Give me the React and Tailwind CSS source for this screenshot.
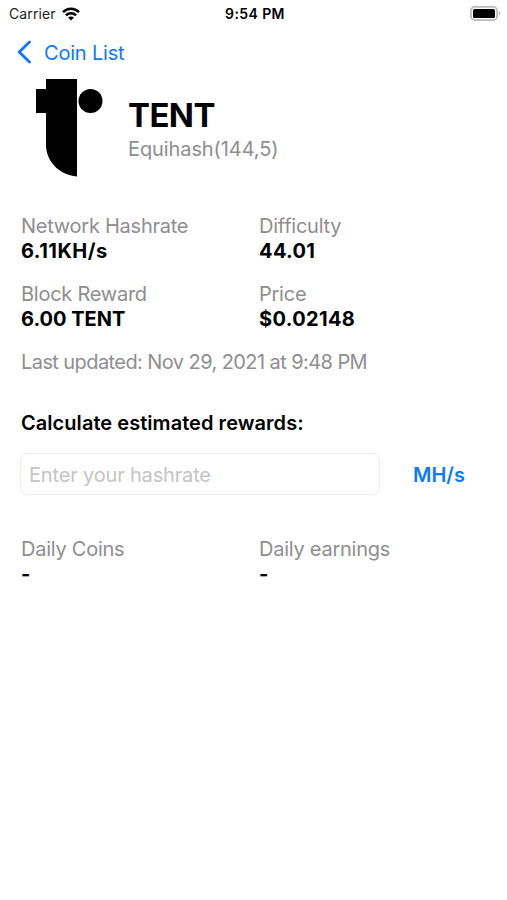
const stats = [
  { label: "Network Hashrate", value: "6.11KH/s", tracking: "tracking-[0.48px]" },
  { label: "Difficulty", value: "44.01", tracking: "tracking-[0.35px]" },
  { label: "Block Reward", value: "6.00 TENT", tracking: "tracking-normal" },
  { label: "Price", value: "$0.02148", tracking: "tracking-[0.35px]" },
];

const results = [
  { label: "Daily Coins", value: "-", tracking: "tracking-normal" },
  { label: "Daily earnings", value: "-", tracking: "tracking-normal" },
];

function Stat({ label, value, tracking }) {
  return (
    <div className="flex flex-col">
      <span className="h-6 text-[20px] leading-6 tracking-[-0.25px] text-[#8e8e90]">{label}</span>
      <span className={`h-6 text-[20px] leading-[26px] font-bold ${tracking}`}>{value}</span>
    </div>
  );
}

function StatusBar() {
  return (
    <header className="grid h-[27px] grid-cols-[1fr_auto_1fr] items-center pr-[6px] pl-[9px] text-[14px] leading-[27px]">
      <div className="flex items-center gap-[6px]">
        <span className="tracking-[0.1px] text-[#222]">Carrier</span>
        <svg width="18" height="14" viewBox="0 0 18 14" fill="none" stroke="black" strokeWidth="2.5">
          <path d="M1 5.2C5.4.6 12.600.6 17 5.200" />
          <path d="M3.900 8.400C6.800 5.600 11.200 5.600 14.100 8.400" />
          <path d="M9 13.500 6 10.500C7.700 9 10.300 9 12 10.500Z" fill="black" stroke="none" />
        </svg>
      </div>
      <span className="font-semibold tracking-[0.4px]">9:54 PM</span>
      <svg className="justify-self-end" width="31" height="15" viewBox="0 0 31 15">
        <rect x=".9" y=".9" width="26.200" height="13.200" rx="3.800" fill="white" stroke="#bcbcbc" strokeWidth="1.800" />
        <rect x="3" y="3" width="22" height="9" rx="1.500" fill="black" />
        <path d="M28.700 5.300c2.200.7 2.200 3.700 0 4.400Z" fill="#bcbcbc" />
      </svg>
    </header>
  );
}

export default function App() {
  return (
    <main className="h-[900px] w-[507px] overflow-hidden bg-white font-[family-name:Inter,sans-serif] text-black">
      <StatusBar />
      <nav className="flex h-[50px] items-center pl-[17px] text-[#0a7aff]">
        <svg width="15" height="24" viewBox="0 0 15 24" fill="none" stroke="currentColor" strokeWidth="2.800" strokeLinecap="round" strokeLinejoin="round">
          <path d="M12.500 2 2.200 12 12.500 22" />
        </svg>
        <span className="ml-[12px] pt-px text-[20px] leading-6 tracking-[-0.2px]">Coin List</span>
      </nav>
      <section className="flex h-[102px] pl-[36px]">
        <svg width="67" height="102" viewBox="0 0 67 102">
          <path d="M10 2H41V99.500C22 98 10 83 10 68V36H0V12H10Z" />
          <circle cx="54.500" cy="24" r="12" />
        </svg>
        <div className="ml-[25px] flex flex-col pt-[18px]">
          <h1 className="text-[33px] leading-[41px] font-bold tracking-[-0.6px]">TENT</h1>
          <p className="text-[20px] leading-[26px] tracking-[-0.1px] text-[#8e8e90]">Equihash(144,5)</p>
        </div>
      </section>
      <section className="mt-[35px] grid grid-cols-[238px_1fr] gap-y-[20px] pl-[21px]">
        {stats.map((s) => <Stat key={s.label} {...s} />)}
      </section>
      <p className="mt-[20px] pl-[21px] text-[20px] leading-6 tracking-[-0.58px] text-[#8e8e90]">Last updated: Nov 29, 2021 at 9:48 PM</p>
      <h2 className="mt-[37px] pl-[21px] text-[20px] leading-6 font-semibold tracking-[0.05px]">Calculate estimated rewards:</h2>
      <div className="mt-[18px] flex h-[42px] items-center pl-[20px]">
        <input
          className="h-[42px] w-[360px] rounded-[7px] border border-[#ececec] px-[8px] pt-[2px] text-[20px] tracking-[-0.17px] outline-none placeholder:text-[#c4c4c6]"
          placeholder="Enter your hashrate"
        />
        <button className="ml-[33px] pt-[2px] text-[20px] font-semibold text-[#0a7aff]">MH/s</button>
      </div>
      <section className="mt-[42px] grid grid-cols-[238px_1fr] pl-[21px]">
        {results.map((s) => <Stat key={s.label} {...s} />)}
      </section>
    </main>
  );
}
